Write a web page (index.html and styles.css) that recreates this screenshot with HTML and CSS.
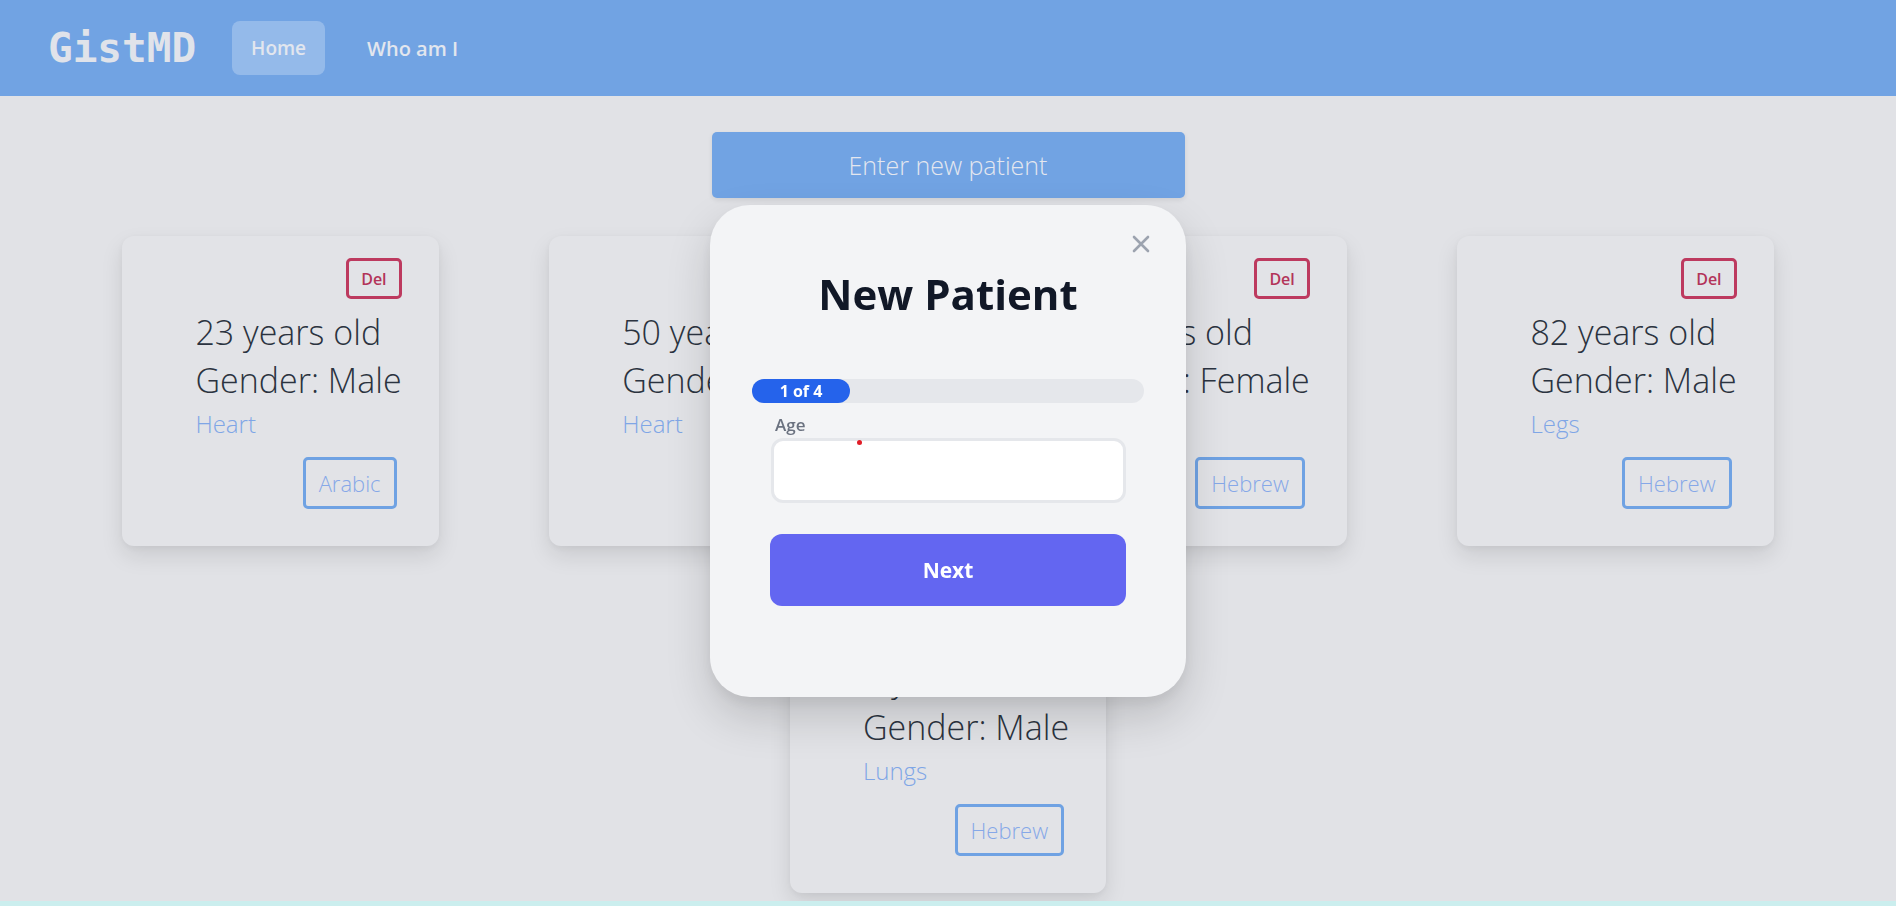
FILE: index.html
```html
<!DOCTYPE html>
<html lang="en">
<head>
<meta charset="utf-8">
<title>GistMD</title>
<link rel="stylesheet" href="styles.css">
</head>
<body>
<header class="nav">
  <div class="logo">GistMD</div>
  <nav class="links">
    <a class="link active">Home</a>
    <a class="link">Who am I</a>
  </nav>
</header>

<main class="main">
  <button class="enter">Enter new patient</button>

  <section class="cards">
    <div class="slot"><div class="card">
      <button class="del">Del</button>
      <div class="body">
        <p class="age">23 years old</p>
        <p class="gender">Gender: Male</p>
        <p class="organ">Heart</p>
      </div>
      <button class="lang">Arabic</button>
    </div></div>

    <div class="slot"><div class="card">
      <button class="del">Del</button>
      <div class="body">
        <p class="age">50 years old</p>
        <p class="gender">Gender: Female</p>
        <p class="organ">Heart</p>
      </div>
      <button class="lang">Hebrew</button>
    </div></div>

    <div class="slot"><div class="card">
      <button class="del">Del</button>
      <div class="body">
        <p class="age">34 years old</p>
        <p class="gender">Gender: Female</p>
        <p class="organ"></p>
      </div>
      <button class="lang">Hebrew</button>
    </div></div>

    <div class="slot"><div class="card">
      <button class="del">Del</button>
      <div class="body">
        <p class="age">82 years old</p>
        <p class="gender">Gender: Male</p>
        <p class="organ">Legs</p>
      </div>
      <button class="lang">Hebrew</button>
    </div></div>

    <div class="slot"><div class="card">
      <button class="del">Del</button>
      <div class="body">
        <p class="age">5 years old</p>
        <p class="gender">Gender: Male</p>
        <p class="organ">Lungs</p>
      </div>
      <button class="lang">Hebrew</button>
    </div></div>
  </section>
</main>

<div class="modal">
  <button class="close" aria-label="Close">
    <svg width="20" height="20" viewBox="0 0 20 20"><path d="M3 3 L17 17 M17 3 L3 17" stroke="#9ca3af" stroke-width="2.6" stroke-linecap="round" fill="none"/></svg>
  </button>
  <h2 class="title">New Patient</h2>
  <div class="track"><div class="fill" style="width:25%">1 of 4</div></div>
  <label class="label">Age</label>
  <div class="field">
    <input class="input" type="text">
    <span class="dot"></span>
  </div>
  <button class="next">Next</button>
</div>

<div class="strip"></div>
</body>
</html>
```

FILE: styles.css
```css
* { box-sizing: border-box; }
html, body { margin: 0; padding: 0; }
body {
  background: #e1e2e6;
  font-family: "Open Sans", "Noto Sans", sans-serif;
  color: #1f2937;
  min-height: 906px;
  overflow: hidden;
}
button { font-family: inherit; cursor: pointer; }

.nav {
  height: 96px;
  background: #71a3e3;
  display: flex;
  align-items: center;
  padding-left: 48px;
  gap: 36px;
}
.logo {
  font-family: "DejaVu Sans Mono", "Liberation Mono", monospace;
  font-weight: 700;
  font-size: 41px;
  color: #e0e3ea;
}
.links { display: flex; gap: 23px; }
.link {
  height: 54px;
  padding: 0 19px;
  display: flex;
  align-items: center;
  border-radius: 8px;
  font-size: 19px;
  font-weight: 600;
  color: #e2e6ee;
}
.link + .link { font-size: 20px; }
.link.active { background: rgba(255,255,255,0.25); }

.main {
  display: flex;
  flex-direction: column;
  align-items: center;
  padding-top: 36px;
}
.enter {
  width: 473px;
  height: 66px;
  border: none;
  border-radius: 5px;
  background: #71a3e3;
  color: #e4e7ef;
  font-size: 25px;
  font-weight: 300;
  box-shadow: 0 2px 5px rgba(0,0,0,0.08);
}

.cards {
  margin-top: 38px;
  width: 1780px;
  display: flex;
  flex-wrap: wrap;
  justify-content: center;
  row-gap: 37px;
}
.slot {
  width: 445px;
  display: flex;
  justify-content: center;
}
.card {
  background: #e2e3e7;
  border-radius: 12px;
  box-shadow: 0 10px 22px rgba(0,0,0,0.10), 0 2px 6px rgba(0,0,0,0.04);
  padding: 22px 37px 37px 73px;
  display: flex;
  flex-direction: column;
  align-items: flex-end;
}
.body { align-self: stretch; width: max-content; padding-top: 9px; }
.body p { margin: 0; white-space: nowrap; }
.age, .gender {
  font-size: 34px;
  line-height: 48px;
  font-weight: 300;
  color: #2b3340;
}
.organ {
  font-size: 24px;
  line-height: 40px;
  height: 40px;
  font-weight: 300;
  color: #7fa6e6;
}
.del {
  height: 41px;
  padding: 0 12px;
  border: 3px solid #bd3a5f;
  border-radius: 5px;
  background: transparent;
  color: #b33459;
  font-size: 16px;
  font-weight: 600;
}
.lang {
  margin-top: 13px;
  margin-right: 5px;
  height: 52px;
  padding: 0 13px;
  border: 3px solid #6fa2e3;
  border-radius: 5px;
  background: transparent;
  color: #86a8e8;
  font-size: 22px;
  font-weight: 300;
}

.modal {
  position: fixed;
  top: 205px;
  left: 50%;
  transform: translateX(-50%);
  width: 476px;
  height: 492px;
  background: #f3f4f6;
  border-radius: 40px;
  box-shadow: 0 20px 45px rgba(0,0,0,0.16), 0 6px 14px rgba(0,0,0,0.06);
  padding: 58px 42px 0;
  display: flex;
  flex-direction: column;
}
.close {
  position: absolute;
  top: 29px;
  right: 35px;
  width: 20px;
  height: 20px;
  padding: 0;
  border: none;
  background: none;
  display: flex;
}
.title {
  margin: 0;
  text-align: center;
  font-size: 42px;
  font-weight: 700;
  color: #111827;
  line-height: 62px;
}
.track {
  margin-top: 54px;
  height: 24px;
  border-radius: 12px;
  background: #e5e7eb;
  display: flex;
}
.fill {
  height: 24px;
  border-radius: 12px;
  background: #2563eb;
  color: #ffffff;
  font-size: 16px;
  font-weight: 700;
  display: flex;
  align-items: center;
  justify-content: center;
}
.label {
  margin: 10px 0 0 23px;
  font-size: 17px;
  font-weight: 600;
  color: #6b7280;
  line-height: 23px;
}
.field {
  position: relative;
  margin: 2px 18px 0 19px;
}
.input {
  display: block;
  width: 100%;
  height: 65px;
  border: 3px solid #e5e7eb;
  border-radius: 12px;
  background: #ffffff;
  outline: none;
}
.dot {
  position: absolute;
  left: 86px;
  top: 2px;
  width: 5px;
  height: 5px;
  border-radius: 50%;
  background: #e11d27;
}
.next {
  margin: 31px 18px 0 18px;
  height: 72px;
  border: none;
  border-radius: 12px;
  background: #6366f1;
  color: #ffffff;
  font-size: 21px;
  font-weight: 700;
}

.strip {
  position: fixed;
  left: 0;
  right: 0;
  bottom: 0;
  height: 5px;
  background: #cbeeee;
}
```
